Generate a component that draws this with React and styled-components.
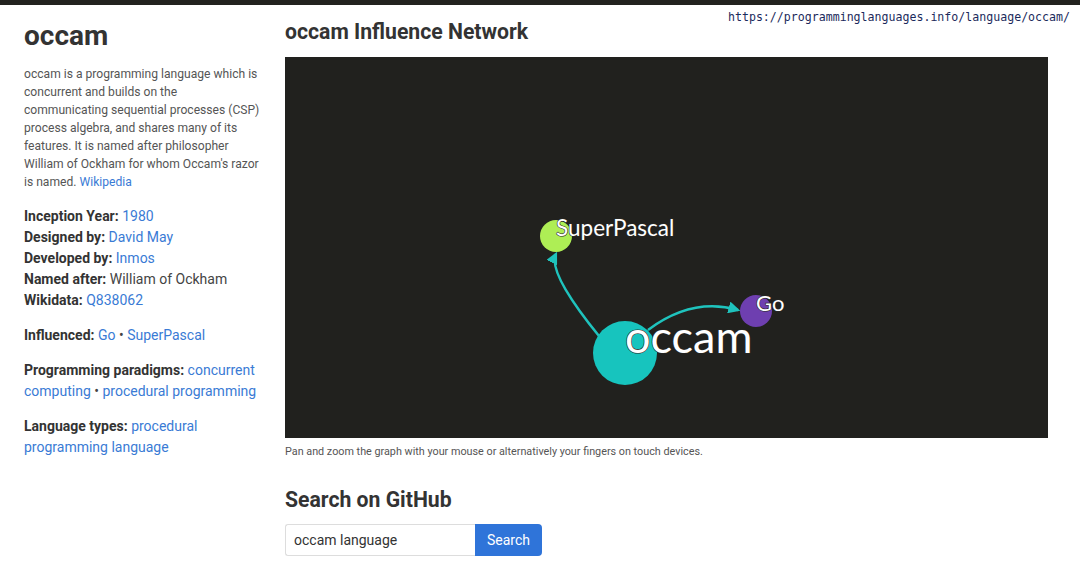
import React from 'react';
import styled, { createGlobalStyle } from 'styled-components';

const GlobalStyle = createGlobalStyle`
  html, body {
    margin: 0;
    padding: 0;
    background: #ffffff;
    font-family: Roboto, "Liberation Sans", Arial, sans-serif;
    color: #333333;
  }
  * { box-sizing: border-box; }
`;

const TopBar = styled.div`
  height: 5px;
  background: #22221f;
`;

const SourceUrl = styled.div`
  position: absolute;
  top: 10px;
  right: 10px;
  font-family: "DejaVu Sans Mono", "Liberation Mono", monospace;
  font-size: 11.6px;
  line-height: 14px;
  color: #1b2a5c;
`;

const Page = styled.div`
  display: flex;
  padding: 0 32px 0 24px;
`;

const Sidebar = styled.aside`
  width: 238px;
  flex-shrink: 0;
  margin-right: 23px;
`;

const Title = styled.h1`
  margin: 14px 0 12px;
  font-size: 28px;
  line-height: 34px;
  font-weight: 700;
  color: #333333;
`;

const Description = styled.p`
  margin: 0 0 15px;
  font-size: 12.1px;
  line-height: 18px;
  color: #555555;
`;

const Facts = styled.p`
  margin: 0 0 14px;
  font-size: 14px;
  line-height: 21px;
  color: #444444;
`;

const Label = styled.b`
  font-weight: 700;
  color: #333333;
`;

const Link = styled.a`
  color: #3a7bd5;
  text-decoration: none;
`;

const Main = styled.main`
  flex: 1;
  min-width: 0;
`;

const SectionTitle = styled.h2`
  margin: ${(p) => p.$top}px 0 ${(p) => p.$bottom}px;
  font-size: 21.2px;
  line-height: 24px;
  font-weight: 700;
  color: #333333;
`;

const GraphBox = styled.div`
  height: 381px;
  background: #21211e;
`;

const Caption = styled.p`
  margin: 6px 0 0;
  font-size: 10.8px;
  line-height: 16px;
  color: #555555;
`;

const SearchForm = styled.form`
  display: flex;
  width: 257px;
  height: 32px;
`;

const SearchInput = styled.input`
  width: 190px;
  height: 32px;
  border: 1px solid #dddddd;
  border-right: none;
  border-radius: 3px 0 0 3px;
  padding: 0 8px;
  font-family: Roboto, "Liberation Sans", Arial, sans-serif;
  font-size: 14px;
  color: #333333;
  outline: none;
`;

const SearchButton = styled.button`
  width: 67px;
  height: 32px;
  border: none;
  border-radius: 0 4px 4px 0;
  background: #2f74d9;
  color: #ffffff;
  font-family: Roboto, "Liberation Sans", Arial, sans-serif;
  font-size: 14px;
  padding: 0;
`;

const NodeLabel = styled.text`
  font-family: Lato, "Open Sans", sans-serif;
  font-size: ${(p) => p.$size}px;
  fill: #ffffff;
  stroke: #2a2a27;
  stroke-width: 1.2px;
  paint-order: stroke;
`;

const nodes = [
  { id: 'occam', x: 340, y: 296, r: 32, color: '#17c4be', size: 45 },
  { id: 'SuperPascal', x: 271, y: 179, r: 16, color: '#aeee55', size: 22.5 },
  { id: 'Go', x: 471, y: 254, r: 16, color: '#6e3fb0', size: 22 },
];

const edges = [
  'M 314 279 Q 262 215 271 197',
  'M 363 273 Q 407 240 453 253',
];

function InfluenceGraph() {
  return (
    <svg width="100%" height="381" viewBox="0 0 763 381">
      <defs>
        <marker
          id="arrow"
          viewBox="0 0 10 10"
          refX="8"
          refY="5"
          markerWidth="4.8"
          markerHeight="4.8"
          orient="auto"
        >
          <path d="M 0 0 L 10 5 L 0 10 z" fill="#1fc3bd" />
        </marker>
      </defs>
      {edges.map((d) => (
        <path
          key={d}
          d={d}
          fill="none"
          stroke="#1fc3bd"
          strokeWidth="2.5"
          markerEnd="url(#arrow)"
        />
      ))}
      {nodes.map((n) => (
        <circle key={n.id} cx={n.x} cy={n.y} r={n.r} fill={n.color} />
      ))}
      {nodes.map((n) => (
        <NodeLabel key={n.id} x={n.x} y={n.y} $size={n.size}>
          {n.id}
        </NodeLabel>
      ))}
    </svg>
  );
}

export default function App() {
  return (
    <>
      <GlobalStyle />
      <TopBar />
      <SourceUrl>https://programminglanguages.info/language/occam/</SourceUrl>
      <Page>
        <Sidebar>
          <Title>occam</Title>
          <Description>
            occam is a programming language which is concurrent and builds on
            the communicating sequential processes (CSP) process algebra, and
            shares many of its features. It is named after philosopher William
            of Ockham for whom Occam&#39;s razor is named.{' '}
            <Link href="#">Wikipedia</Link>
          </Description>
          <Facts>
            <Label>Inception Year:</Label> <Link href="#">1980</Link>
            <br />
            <Label>Designed by:</Label> <Link href="#">David May</Link>
            <br />
            <Label>Developed by:</Label> <Link href="#">Inmos</Link>
            <br />
            <Label>Named after:</Label> William of Ockham
            <br />
            <Label>Wikidata:</Label> <Link href="#">Q838062</Link>
          </Facts>
          <Facts>
            <Label>Influenced:</Label> <Link href="#">Go</Link> •{' '}
            <Link href="#">SuperPascal</Link>
          </Facts>
          <Facts>
            <Label>Programming paradigms:</Label>{' '}
            <Link href="#">concurrent computing</Link> •{' '}
            <Link href="#">procedural programming</Link>
          </Facts>
          <Facts>
            <Label>Language types:</Label>{' '}
            <Link href="#">procedural programming language</Link>
          </Facts>
        </Sidebar>
        <Main>
          <SectionTitle $top={15} $bottom={13}>
            occam Influence Network
          </SectionTitle>
          <GraphBox>
            <InfluenceGraph />
          </GraphBox>
          <Caption>
            Pan and zoom the graph with your mouse or alternatively your fingers
            on touch devices.
          </Caption>
          <SectionTitle $top={28} $bottom={12}>
            Search on GitHub
          </SectionTitle>
          <SearchForm onSubmit={(e) => e.preventDefault()}>
            <SearchInput defaultValue="occam language" />
            <SearchButton type="submit">Search</SearchButton>
          </SearchForm>
        </Main>
      </Page>
    </>
  );
}
